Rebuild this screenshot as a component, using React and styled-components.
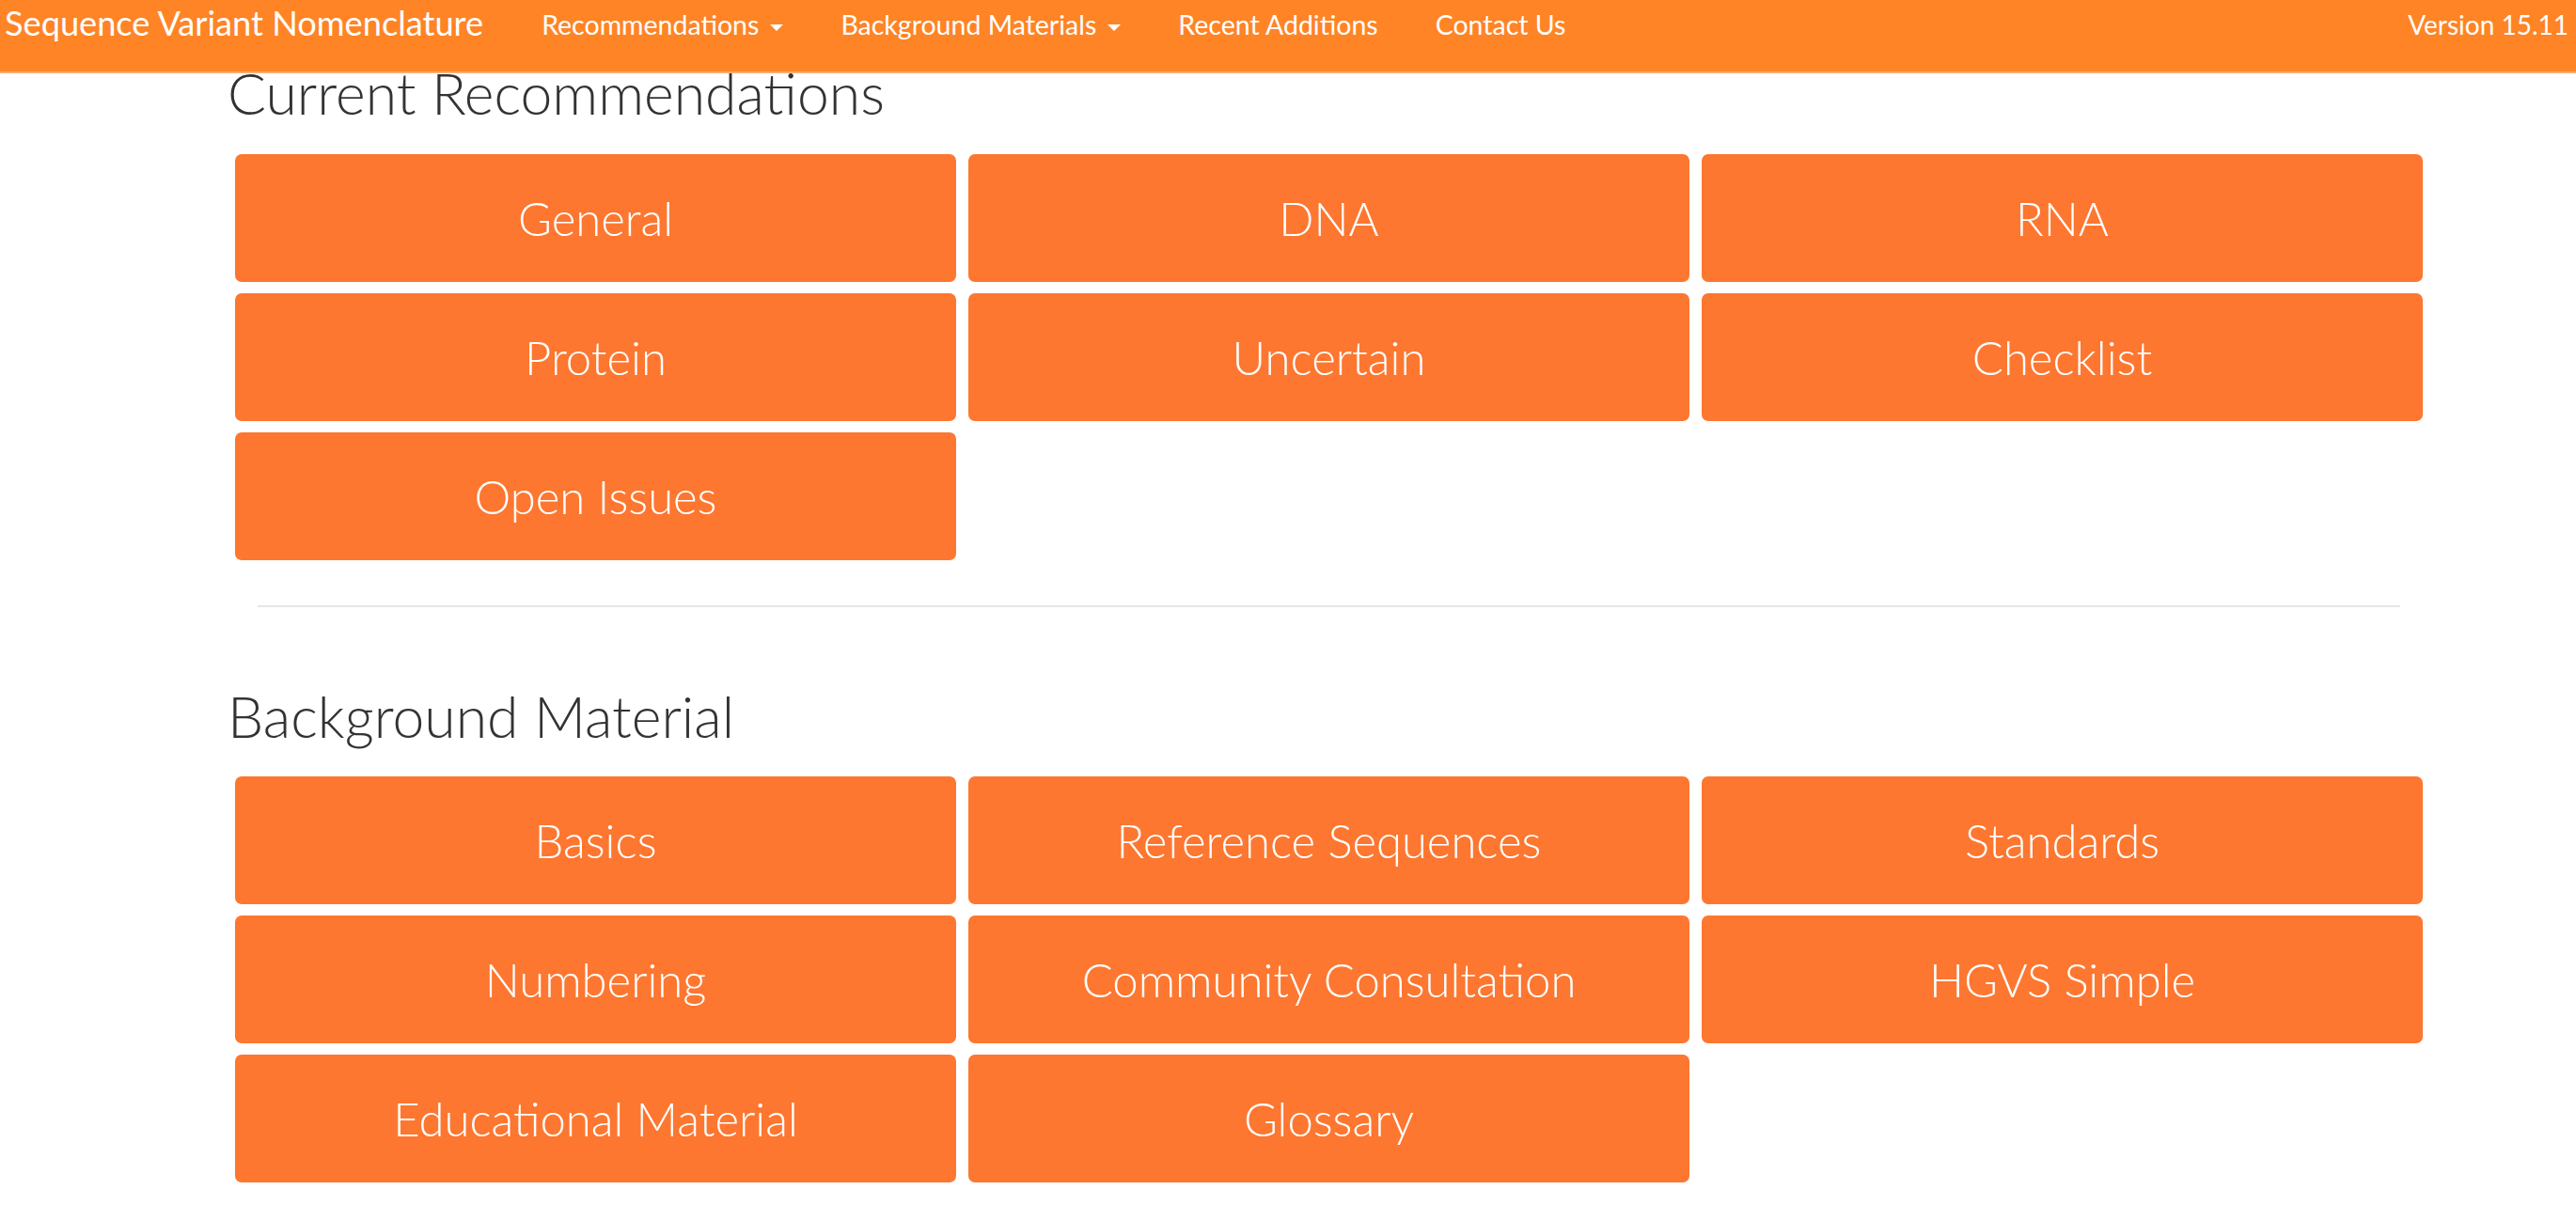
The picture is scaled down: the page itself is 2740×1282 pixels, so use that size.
import styled, { createGlobalStyle } from 'styled-components';

const GlobalStyle = createGlobalStyle`
  html, body {
    margin: 0;
    padding: 0;
    background: #ffffff;
    font-family: Lato, "Liberation Sans", sans-serif;
  }
`;

const recommendations = ['General', 'DNA', 'RNA', 'Protein', 'Uncertain', 'Checklist', 'Open Issues'];
const background = [
  'Basics',
  'Reference Sequences',
  'Standards',
  'Numbering',
  'Community Consultation',
  'HGVS Simple',
  'Educational Material',
  'Glossary',
];

const App = () => {
  return (
    <>
      <GlobalStyle />
      <Navbar>
        <Brand>Sequence Variant Nomenclature</Brand>
        <NavList>
          <NavLink>
            Recommendations
            <Caret />
          </NavLink>
          <NavLink>
            Background Materials
            <Caret />
          </NavLink>
          <NavLink>Recent Additions</NavLink>
          <NavLink>Contact Us</NavLink>
        </NavList>
        <Version>Version 15.11</Version>
      </Navbar>
      <Main>
        <Heading>Current Recommendations</Heading>
        <Grid top="44px">
          {recommendations.map((item) => (
            <Tile key={item}>{item}</Tile>
          ))}
        </Grid>
        <Divider />
        <Heading top="95px">Background Material</Heading>
        <Grid top="43px">
          {background.map((item) => (
            <Tile key={item}>{item}</Tile>
          ))}
        </Grid>
      </Main>
    </>
  );
};

export default App;

export const Navbar = styled.nav`
  display: flex;
  align-items: flex-start;
  height: 76px;
  padding: 0 8px 0 5px;
  background-color: #ff8426;
  border-bottom: 2px solid #ffae6b;
  color: #ffffff;
`;

export const Brand = styled.div`
  font-size: 36.2px;
  line-height: 1;
  padding-top: 6px;
  margin-right: 62px;
  white-space: nowrap;
`;

export const NavList = styled.div`
  display: flex;
  align-items: flex-start;
  gap: 61px;
  flex-grow: 1;
  padding-top: 12px;
`;

export const NavLink = styled.div`
  display: flex;
  align-items: center;
  font-size: 28.5px;
  line-height: 1;
  white-space: nowrap;
`;

export const Caret = styled.span`
  display: inline-block;
  width: 0;
  height: 0;
  margin-left: 12px;
  margin-top: 7px;
  border-top: 7px solid #ffffff;
  border-left: 7px solid transparent;
  border-right: 7px solid transparent;
`;

export const Version = styled.div`
  font-size: 28px;
  line-height: 1;
  padding-top: 12px;
  white-space: nowrap;
`;

export const Main = styled.main`
  padding: 0 163px 0 242px;
`;

export const Heading = styled.h1`
  margin: ${(props) => props.top || '0'} 0 0 0;
  font-size: 60.7px;
  font-weight: 300;
  line-height: 42px;
  color: #333333;
`;

export const Grid = styled.div`
  display: grid;
  grid-template-columns: repeat(3, 1fr);
  grid-auto-rows: 136px;
  column-gap: 13px;
  row-gap: 12px;
  margin: ${(props) => props.top} 0 0 8px;
`;

export const Tile = styled.a`
  display: flex;
  align-items: center;
  justify-content: center;
  background-color: #fd7730;
  border-radius: 7px;
  color: #ffffff;
  font-size: 49px;
  font-weight: 300;
  cursor: pointer;
`;

export const Divider = styled.hr`
  margin: 48px 24px 0 32px;
  border: 0;
  border-top: 2px solid #e6e6e6;
`;
